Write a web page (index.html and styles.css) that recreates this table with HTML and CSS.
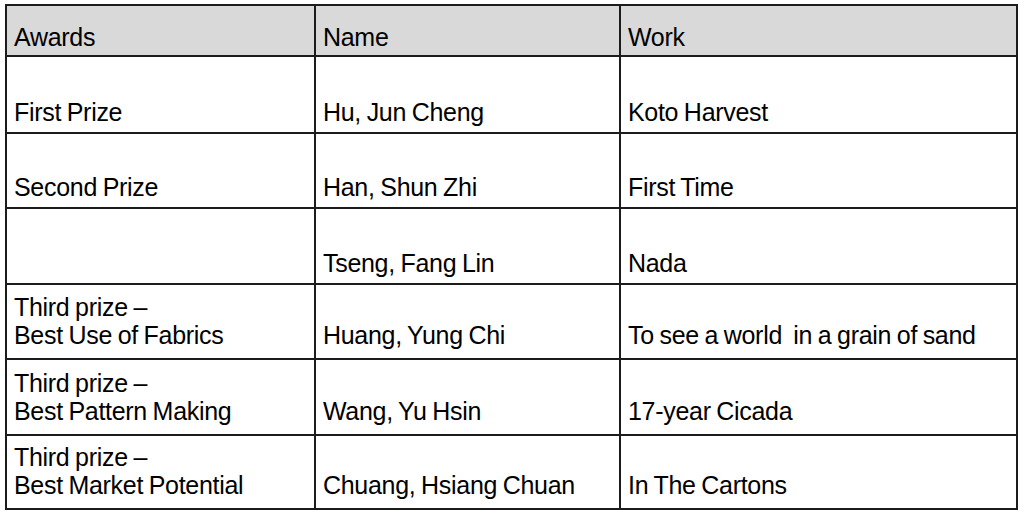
FILE: index.html
```html
<!DOCTYPE html>
<html lang="en">
<head>
<meta charset="utf-8">
<title>Awards</title>
<link rel="stylesheet" href="styles.css">
</head>
<body>
<table class="awards">
  <colgroup>
    <col class="c-award">
    <col class="c-name">
    <col class="c-work">
  </colgroup>
  <thead>
    <tr class="r-head">
      <th>Awards</th>
      <th>Name</th>
      <th>Work</th>
    </tr>
  </thead>
  <tbody>
    <tr class="r-1">
      <td>First Prize</td>
      <td>Hu, Jun Cheng</td>
      <td>Koto Harvest</td>
    </tr>
    <tr class="r-2">
      <td>Second Prize</td>
      <td>Han, Shun Zhi</td>
      <td>First Time</td>
    </tr>
    <tr class="r-3">
      <td></td>
      <td>Tseng, Fang Lin</td>
      <td>Nada</td>
    </tr>
    <tr class="r-4 two">
      <td>Third prize –<br>Best Use of Fabrics</td>
      <td>Huang, Yung Chi</td>
      <td>To see a world&nbsp; in a grain of sand</td>
    </tr>
    <tr class="r-5 two">
      <td>Third prize –<br>Best Pattern Making</td>
      <td>Wang, Yu Hsin</td>
      <td>17-year Cicada</td>
    </tr>
    <tr class="r-6 two">
      <td>Third prize –<br>Best Market Potential</td>
      <td>Chuang, Hsiang Chuan</td>
      <td>In The Cartons</td>
    </tr>
  </tbody>
</table>
</body>
</html>
```

FILE: styles.css
```css
html, body {
  margin: 0;
  padding: 0;
  background: #ffffff;
}

body {
  padding: 4px 0 0 5px;
  font-family: "Liberation Sans", Arial, sans-serif;
  color: #000000;
}

.awards {
  border-collapse: collapse;
  table-layout: fixed;
  width: 1011px;
  border: 2px solid #1c1c1c;
  font-size: 25px;
  line-height: 28px;
  letter-spacing: -0.3px;
  word-spacing: -1px;
}

.c-award { width: 309px; }
.c-name { width: 305px; }
.c-work { width: 397px; }

.awards th,
.awards td {
  border: 2px solid #1c1c1c;
  padding: 0 4px 6px 7px;
  text-align: left;
  vertical-align: bottom;
  font-weight: normal;
  white-space: nowrap;
}

.awards thead th {
  background: #d9d9d9;
  padding-bottom: 4px;
}

.r-head { height: 51px; }
.r-1 { height: 77px; }
.r-2 { height: 75px; }
.r-3 { height: 76px; }
.r-4 { height: 75px; }
.r-5 { height: 76px; }
.r-6 { height: 74px; }

.two td {
  padding-bottom: 9px;
}
```
